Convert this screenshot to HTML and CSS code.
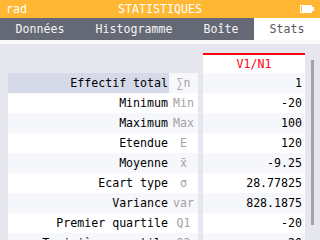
FILE: index.html
```html
<!DOCTYPE html>
<html lang="fr">
<head>
    <meta charset="UTF-8">
    <title>Statistiques</title>
    <link rel="stylesheet" href="styles.css">
</head>
<body>

<header class="title-bar">
    <span class="angle-unit">rad</span>
    <span class="app-title">STATISTIQUES</span>
    <svg class="battery" width="14" height="8" viewBox="0 0 14 8">
        <rect x="0.5" y="0.5" width="11" height="7" fill="none" stroke="#fff"/>
        <rect x="2" y="1" width="10" height="6" fill="#fff"/>
        <rect x="12" y="2" width="2" height="4" fill="#fff"/>
    </svg>
</header>

<nav class="tabs">
    <div class="tab">Données</div>
    <div class="tab">Histogramme</div>
    <div class="tab">Boîte</div>
    <div class="tab active">Stats</div>
</nav>
<div class="tab-edge"></div>

<main class="stats">
    <div class="names">
        <div class="corner"></div>
        <div class="row odd"><span class="label selected">Effectif total</span><span class="symbol">∑n</span></div>
        <div class="row"><span class="label">Minimum</span><span class="symbol">Min</span></div>
        <div class="row odd"><span class="label">Maximum</span><span class="symbol">Max</span></div>
        <div class="row"><span class="label">Etendue</span><span class="symbol">E</span></div>
        <div class="row odd"><span class="label">Moyenne</span><span class="symbol">x̄</span></div>
        <div class="row"><span class="label">Ecart type</span><span class="symbol">σ</span></div>
        <div class="row odd"><span class="label">Variance</span><span class="symbol">var</span></div>
        <div class="row"><span class="label">Premier quartile</span><span class="symbol">Q1</span></div>
        <div class="row odd"><span class="label">Troisième quartile</span><span class="symbol">Q3</span></div>
    </div>

    <div class="values">
        <div class="series-title">V1/N1</div>
        <div class="value odd">1</div>
        <div class="value">-20</div>
        <div class="value odd">100</div>
        <div class="value">120</div>
        <div class="value odd">-9.25</div>
        <div class="value">28.77825</div>
        <div class="value odd">828.1875</div>
        <div class="value">-20</div>
        <div class="value odd">20</div>
    </div>

    <div class="scrollbar"></div>
</main>

</body>
</html>
```

FILE: styles.css
```css
body {
    margin: 0;
    width: 320px;
    height: 240px;
    overflow: hidden;
    background-color: #e6e6ef;
    font-family: "DejaVu Sans Mono", monospace;
    font-size: 11.6px;
    color: #000;
}

/* Title bar */
.title-bar {
    height: 18px;
    background-color: #ffb734;
    color: #fff;
    display: grid;
    grid-template-columns: 1fr auto 1fr;
    align-items: center;
    padding: 0 6px;
}

.battery {
    justify-self: end;
}

/* Tabs */
.tabs {
    display: flex;
    height: 22px;
    background-color: #656975;
}

.tab {
    flex: 1 1 auto;
    text-align: center;
    line-height: 22px;
    color: #f4f4f4;
}

.tab.active {
    background-color: #fff;
    color: #5a5a5a;
}

.tab-edge {
    height: 4px;
    background-color: #fafafc;
}

/* Stats table */
.stats {
    display: flex;
    align-items: flex-start;
    padding: 9px 0 0 8px;
}

.names {
    display: flex;
    flex-direction: column;
    width: 190px;
}

.corner {
    height: 20px;
}

.row {
    display: flex;
    height: 20px;
    line-height: 20px;
    background-color: #fff;
}

.row.odd,
.value.odd {
    background-color: #f6f7fb;
}

.label {
    width: 160px;
    padding-right: 1px;
    text-align: right;
}

.label.selected {
    background-color: #d6d9e7;
}

.symbol {
    width: 29px;
    text-align: center;
    color: #a3a3a3;
}

.values {
    display: flex;
    flex-direction: column;
    width: 102px;
    margin-left: 5px;
}

.series-title {
    height: 18px;
    line-height: 18px;
    border-top: 2px solid #ff000c;
    background-color: #fff;
    color: #ff000c;
    text-align: center;
}

.value {
    height: 20px;
    line-height: 20px;
    padding-right: 3px;
    text-align: right;
    background-color: #fff;
}

.scrollbar {
    width: 3px;
    height: 165px;
    margin: 7px 0 0 6px;
    background-color: #a4a4a8;
}
```
